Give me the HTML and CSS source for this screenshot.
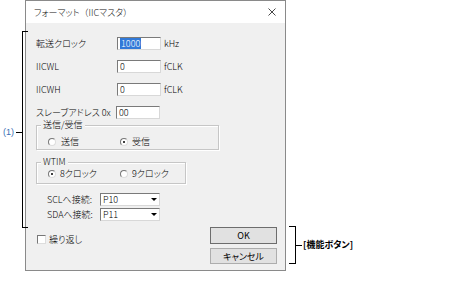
FILE: index.html
```html
<!DOCTYPE html>
<html lang="ja">
<head>
<meta charset="utf-8">
<link rel="stylesheet" href="styles.css">
</head>
<body>
<div class="page">
  <div class="dialog">
    <div class="titlebar">
      <span class="title">フォーマット<span class="paren">（</span>IICマスタ<span class="paren">）</span></span>
      <svg class="close" width="8" height="8" viewBox="0 0 8 8"><path d="M0.5 0.5L7.5 7.5M7.5 0.5L0.5 7.5" stroke="#333" stroke-width="0.9" fill="none"/></svg>
    </div>
    <div class="body">
      <div class="row">
        <span class="lbl">転送クロック</span>
        <span class="input"><span class="hl">1000</span></span>
        <span class="unit">kHz</span>
      </div>
      <div class="row">
        <span class="lbl">IICWL</span>
        <span class="input">0</span>
        <span class="unit">fCLK</span>
      </div>
      <div class="row">
        <span class="lbl">IICWH</span>
        <span class="input">0</span>
        <span class="unit">fCLK</span>
      </div>
      <div class="row last">
        <span class="lbl lbl-addr">スレーブアドレス 0x</span>
        <span class="input">00</span>
      </div>

      <div class="group g1">
        <span class="legend">送信/受信</span>
        <div class="radios r1">
          <span class="radio-item"><span class="radio"></span>送信</span>
          <span class="radio-item"><span class="radio on"></span>受信</span>
        </div>
      </div>

      <div class="group g2">
        <span class="legend">WTIM</span>
        <div class="radios r2">
          <span class="radio-item"><span class="radio on"></span>8クロック</span>
          <span class="radio-item"><span class="radio"></span>9クロック</span>
        </div>
      </div>

      <div class="srow scl">
        <span class="slbl">SCLへ接続:</span>
        <span class="select"><span class="sval">P10</span><span class="arrow"></span></span>
      </div>
      <div class="srow sda">
        <span class="slbl">SDAへ接続:</span>
        <span class="select"><span class="sval">P11</span><span class="arrow"></span></span>
      </div>

      <div class="bottom">
        <label class="check"><span class="box"></span>繰り返し</label>
        <div class="buttons">
          <span class="btn ok">OK</span>
          <span class="btn cancel">キャンセル</span>
        </div>
      </div>
    </div>
  </div>

  <div class="ann bracket-left"></div>
  <div class="ann tick-left"></div>
  <span class="ann ann-label1">(1)</span>

  <div class="ann bracket-right"></div>
  <div class="ann tick-right"></div>
  <span class="ann ann-label2">[機能ボタン]</span>
</div>
</body>
</html>
```

FILE: styles.css
```css
* { box-sizing: border-box; margin: 0; padding: 0; }
html, body { width: 475px; height: 282px; overflow: hidden; background: #fff; }
body {
  font-family: "Noto Sans CJK JP", "Noto Sans", sans-serif;
  font-size: 9px;
  font-weight: 300;
  line-height: 11px;
  color: #000;
  font-feature-settings: "palt";
}
.page { position: relative; width: 475px; height: 282px; padding-left: 25px; }

.dialog {
  width: 261px;
  height: 271px;
  border: 1px solid #8a8a8a;
  background: #f0f0f0;
  display: flex;
  flex-direction: column;
}
.titlebar {
  height: 22px;
  flex: none;
  background: #fff;
  display: flex;
  align-items: center;
  justify-content: space-between;
  padding: 0 9px 0 8px;
}
.title { color: #111; }
.paren { font-feature-settings: normal; }
.close { display: block; }

.body { display: flex; flex-direction: column; padding: 14px 0 0 10px; flex: 1; }

.row { display: flex; align-items: center; height: 13px; margin-bottom: 10px; }
.row.last { margin-bottom: 0; }
.lbl { width: 81px; flex: none; }
.lbl-addr { width: 80px; }
.input {
  width: 44px;
  height: 13px;
  background: #fff;
  border: 1px solid;
  border-color: #7a7a7a #d8d8d8 #d8d8d8 #7a7a7a;
  padding-left: 2px;
  line-height: 11px;
  display: flex;
  align-items: center;
}
.hl { background: #3179d8; color: #fff; padding: 0 1px; height: 11px; line-height: 11px; }
.unit { margin-left: 3px; }

.group {
  border: 1px solid #c6c6c6;
  box-shadow: inset 1px 1px #fff, 1px 1px #fff;
  display: flex;
  flex-direction: column;
}
.g1 { width: 183px; margin-top: 6px; padding-bottom: 2px; }
.g2 { width: 150px; margin-top: 12px; padding-bottom: 4px; }
.legend {
  display: block;
  width: fit-content;
  height: 12px;
  line-height: 12px;
  margin: -7px 0 0 4px;
  padding: 0 2px;
  background: #f0f0f0;
}
.radios { display: flex; height: 11px; padding-left: 11px; align-items: center; }
.r1 { margin-top: 5px; }
.r2 { margin-top: 0; }
.radio-item { display: flex; align-items: center; width: 72px; flex: none; }
.radio {
  width: 8px;
  height: 8px;
  border-radius: 50%;
  border: 1px solid;
  border-color: #777 #ddd #ddd #777;
  background: #fff;
  margin-right: 4px;
  position: relative;
  flex: none;
}
.radio.on::after {
  content: "";
  position: absolute;
  left: 2px;
  top: 2px;
  width: 2px;
  height: 2px;
  border-radius: 50%;
  background: #000;
}
.r1 .radio-item:first-child .radio { margin-right: 5px; }

.srow { display: flex; align-items: center; height: 13px; padding-left: 11px; }
.scl { margin-top: 9px; }
.sda { margin-top: 2px; }
.slbl { width: 53px; flex: none; }
.select {
  width: 60px;
  height: 13px;
  background: #fff;
  border: 1px solid;
  border-color: #7a7a7a #d8d8d8 #d8d8d8 #7a7a7a;
  display: flex;
  align-items: center;
  justify-content: space-between;
}
.sval { padding-left: 2px; }
.arrow {
  width: 0;
  height: 0;
  border-left: 3px solid transparent;
  border-right: 3px solid transparent;
  border-top: 3px solid #000;
  margin-right: 2px;
}

.bottom { display: flex; justify-content: space-between; margin-top: 6px; }
.check { display: flex; align-items: center; margin: 8px 0 0 1px; height: 9px; }
.box {
  width: 9px;
  height: 9px;
  background: #fff;
  border: 1px solid;
  border-color: #777 #ddd #ddd #777;
  margin-right: 3px;
}
.buttons { display: flex; flex-direction: column; gap: 4px; margin-right: 8px; }
.btn {
  width: 67px;
  background: #e1e1e1;
  border: 1px solid #adadad;
  display: flex;
  align-items: center;
  justify-content: center;
  color: #000;
  font-weight: 400;
}
.ok { height: 17px; border-color: #6d6d6d; }
.cancel { height: 16px; }

.ann { position: absolute; }
.bracket-left { left: 22px; top: 31px; width: 6px; height: 197px; border: 1px solid #000; border-right: none; }
.tick-left { left: 16px; top: 132px; width: 6px; height: 1px; background: #000; }
.ann-label1 { left: 3px; top: 126px; color: #3a6fb5; font-family: "Liberation Sans", sans-serif; font-size: 9px; font-weight: 400; line-height: 12px; }
.bracket-right { left: 289px; top: 226px; width: 7px; height: 38px; border: 1px solid #000; border-left: none; }
.tick-right { left: 296px; top: 245px; width: 6px; height: 1px; background: #000; }
.ann-label2 { left: 303px; top: 239px; font-size: 9px; line-height: 12px; font-weight: 700; color: #000; }
```
